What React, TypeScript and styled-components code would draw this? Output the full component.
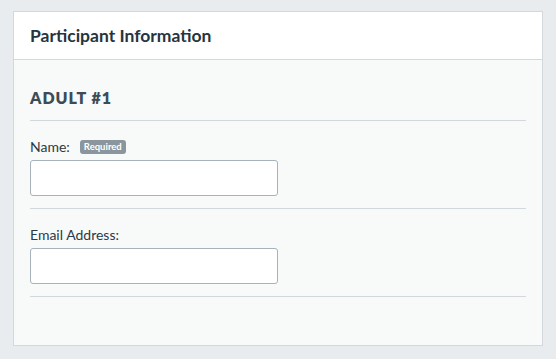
import React from 'react';
import styled, { createGlobalStyle } from 'styled-components';

const GlobalStyle = createGlobalStyle`
    html, body {
        margin: 0;
        padding: 0;
        background: #e9ecee;
        font-family: Lato, "Open Sans", "Liberation Sans", sans-serif;
        color: #2c3a44;
    }
`;

interface Field {
    label: string;
    required?: boolean;
}

const fields: Field[] = [{ label: 'Name:', required: true }, { label: 'Email Address:' }];

export default function App() {
    return (
        <>
            <GlobalStyle />
            <Page>
                <Card>
                    <CardHeader>
                        <Title>Participant Information</Title>
                    </CardHeader>
                    <CardBody>
                        <SectionHeading>ADULT #1</SectionHeading>
                        {fields.map((f) => (
                            <FieldRow key={f.label}>
                                <Label>
                                    {f.label}
                                    {f.required && <Badge>Required</Badge>}
                                </Label>
                                <Input type="text" />
                            </FieldRow>
                        ))}
                    </CardBody>
                </Card>
            </Page>
        </>
    );
}

const Page = styled.div`
    padding: 11px 13px 13px 13px;
`;

const Card = styled.div`
    width: 530px;
    height: 335px;
    box-sizing: border-box;
    border: 1px solid #d2d8db;
    background: #f8f9f9;
    display: flex;
    flex-direction: column;
`;

const CardHeader = styled.div`
    height: 48px;
    box-sizing: border-box;
    background: #ffffff;
    border-bottom: 1px solid #d2d8db;
    display: flex;
    align-items: center;
    padding: 0 16px;
`;

const Title = styled.h2`
    margin: 0;
    font-size: 17.5px;
    font-weight: 700;
    color: #26343e;
    line-height: 20px;
`;

const CardBody = styled.div`
    padding: 28px 16px 0 16px;
`;

const SectionHeading = styled.div`
    font-size: 16px;
    font-weight: 800;
    letter-spacing: 1px;
    color: #3b4c57;
    line-height: 20px;
    padding-bottom: 12px;
    border-bottom: 1px solid #d2d8db;
`;

const FieldRow = styled.div`
    padding: 17px 0 12px 0;
    border-bottom: 1px solid #d2d8db;
    display: flex;
    flex-direction: column;
    gap: 4px;
`;

const Label = styled.label`
    display: flex;
    align-items: center;
    gap: 10px;
    font-size: 14px;
    line-height: 18px;
    color: #2c3a44;
`;

const Badge = styled.span`
    background: #8a959d;
    color: #ffffff;
    font-size: 9.5px;
    font-weight: 700;
    line-height: 14px;
    padding: 0 4px;
    border-radius: 3px;
`;

const Input = styled.input`
    width: 248px;
    height: 36px;
    box-sizing: border-box;
    border: 1px solid #a8b2ba;
    border-radius: 3px;
    background: #ffffff;
    outline: none;
`;
